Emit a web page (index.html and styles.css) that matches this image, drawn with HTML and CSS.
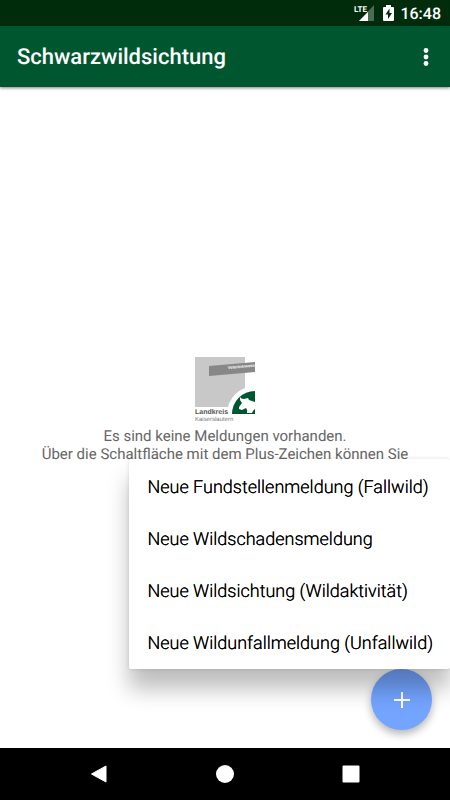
FILE: index.html
```html
<!DOCTYPE html>
<html lang="de">
<head>
  <meta charset="UTF-8" />
  <meta name="viewport" content="width=device-width, initial-scale=1.0" />
  <title>Schwarzwildsichtung</title>
  <link rel="stylesheet" href="styles.css">
</head>
<body>

  <div class="status-bar">
    <svg class="signal" width="20" height="18" viewBox="0 0 20 18" role="img" aria-label="LTE">
      <path d="M20 1v16H5z" fill="#fff" fill-opacity=".3" />
      <path d="M14 8v9H5z" fill="#fff" />
      <text x="0" y="8" class="lte">LTE</text>
    </svg>
    <svg class="battery" width="11" height="16" viewBox="0 0 11 16" aria-hidden="true">
      <path d="M3 0h5v2h2q1 0 1 1v12q0 1-1 1H1q-1 0-1-1V3q0-1 1-1h2z" fill="#fff" />
      <path d="M6.500 3.500L2.500 9.500H5V14l4-6H6.500z" fill="#002c0b" />
    </svg>
    <span class="clock">16:48</span>
  </div>

  <header class="app-bar">
    <h1 class="app-title">Schwarzwildsichtung</h1>
    <button class="more" aria-label="Weitere Optionen">
      <svg width="6" height="20" viewBox="0 0 6 20">
        <circle cx="3" cy="3.500" r="2.400" />
        <circle cx="3" cy="10" r="2.400" />
        <circle cx="3" cy="16.500" r="2.400" />
      </svg>
    </button>
  </header>

  <main class="content">
    <div class="empty">
      <svg class="logo" width="60" height="66" viewBox="0 0 60 66" role="img" aria-label="Landkreis Kaiserslautern">
        <path d="M0 0h50v50H0z" fill="#c8c8c8" />
        <path d="M14 9l46-4v10l-46 4z" fill="#878787" />
        <text x="33" y="12" class="logo-banner" transform="rotate(-5 33 12)">Veterinärwesen</text>
        <path d="M32 57a28 28 0 0 1 28-28v28z" fill="#fff" />
        <path d="M37 57a23 23 0 0 1 23-23v23z" fill="#00572f" />
        <path d="M45 40Q46 42 49 42L53 41L54 43L60 45V52Q58 53 57 56H52Q53 53 51 51L47 53L44 52L44 50L47 46L45 43z" fill="#fff" />
        <text x="0" y="57" class="logo-name">Landkreis</text>
        <text x="0" y="64" class="logo-place">Kaiserslautern</text>
      </svg>
      <p class="empty-text">Es sind keine Meldungen vorhanden.<br>Über die Schaltfläche mit dem Plus-Zeichen können Sie</p>
    </div>

    <button class="fab" aria-label="Neue Meldung">
      <svg width="16" height="16" viewBox="0 0 16 16">
        <path d="M8 0v16M0 8h16" stroke="#fff" stroke-width="2" />
      </svg>
    </button>

    <div class="menu" role="menu">
      <button class="menu-item" role="menuitem">Neue Fundstellenmeldung (Fallwild)</button>
      <button class="menu-item" role="menuitem">Neue Wildschadensmeldung</button>
      <button class="menu-item" role="menuitem">Neue Wildsichtung (Wildaktivität)</button>
      <button class="menu-item" role="menuitem">Neue Wildunfallmeldung (Unfallwild)</button>
    </div>
  </main>

  <nav class="nav-bar">
    <button class="nav-button" aria-label="Zurück">
      <svg width="18" height="18" viewBox="0 0 18 18">
        <path d="M1.500 9L16 1v16z" stroke="#fff" stroke-linejoin="round" />
      </svg>
    </button>
    <button class="nav-button" aria-label="Startseite">
      <svg width="18" height="18" viewBox="0 0 18 18">
        <circle cx="9" cy="9" r="9" />
      </svg>
    </button>
    <button class="nav-button" aria-label="Übersicht">
      <svg width="18" height="18" viewBox="0 0 18 18">
        <rect x=".500" y=".500" width="17" height="17" rx="1" />
      </svg>
    </button>
  </nav>

</body>
</html>
```

FILE: styles.css
```css
* {
  box-sizing: border-box;
}

body {
  margin: 0;
  min-height: 100vh;
  display: flex;
  flex-direction: column;
  font-family: Roboto, sans-serif;
  text-rendering: geometricPrecision;
  background: #fff;
}

button {
  padding: 0;
  border: none;
  background: none;
  font-family: inherit;
  text-rendering: inherit;
  cursor: pointer;
}

svg {
  display: block;
  overflow: visible;
}

.status-bar {
  display: flex;
  align-items: center;
  justify-content: flex-end;
  height: 26px;
  padding: 0 9px;
  background: #002c0b;
  color: #fff;
}

.lte {
  font-size: 8px;
  font-weight: bold;
  fill: #fff;
}

.battery {
  margin: 0 6px 0 9px;
}

.clock {
  font-size: 16px;
  font-weight: 500;
}

.app-bar {
  display: flex;
  align-items: center;
  justify-content: space-between;
  height: 61px;
  padding: 0 17px;
  background: #00572f;
  color: #fff;
  box-shadow: 0 1px 3px rgba(0, 0, 0, 0.5);
  z-index: 1;
}

.app-title {
  margin: 0;
  padding-top: 2px;
  font-size: 22px;
  font-weight: 500;
}

.more {
  padding: 4px;
}

.more svg,
.nav-button svg {
  fill: #fff;
}

.content {
  position: relative;
  flex: 1;
  display: flex;
  align-items: center;
  justify-content: center;
}

.empty {
  display: flex;
  flex-direction: column;
  align-items: center;
  padding: 0 16px 16px;
}

.logo-banner {
  font: bold 4px "Liberation Sans", sans-serif;
  fill: #fff;
}

.logo-name {
  font: bold 7px "Liberation Sans", sans-serif;
  fill: #555;
}

.logo-place {
  font: 6px "Liberation Sans", sans-serif;
  fill: #777;
}

.empty-text {
  margin: 4px 0 0;
  font-size: 15px;
  line-height: 18px;
  text-align: center;
  color: #666;
}

.fab {
  position: absolute;
  right: 18px;
  bottom: 18px;
  display: flex;
  align-items: center;
  justify-content: center;
  width: 61px;
  height: 61px;
  border-radius: 50%;
  background: #73a4ff;
  box-shadow: 0 4px 8px rgba(0, 0, 0, 0.3);
}

.menu {
  position: absolute;
  right: 0;
  bottom: 79px;
  display: grid;
  grid-auto-rows: 1fr;
  min-height: 210px;
  padding-top: 2px;
  border-radius: 2px;
  background: #fff;
  box-shadow: 0 20px 22px rgba(0, 0, 0, 0.26), 0 0 4px rgba(0, 0, 0, 0.12);
}

.menu-item {
  padding: 0 17px 0 18px;
  font-size: 18px;
  font-weight: 300;
  text-align: left;
  text-shadow: 0 0 0 #000;
  color: #000;
}

.nav-bar {
  display: flex;
  align-items: center;
  justify-content: center;
  height: 52px;
  background: #000;
}

.nav-button {
  display: flex;
  align-items: center;
  justify-content: center;
  width: 28%;
  height: 100%;
}
```
